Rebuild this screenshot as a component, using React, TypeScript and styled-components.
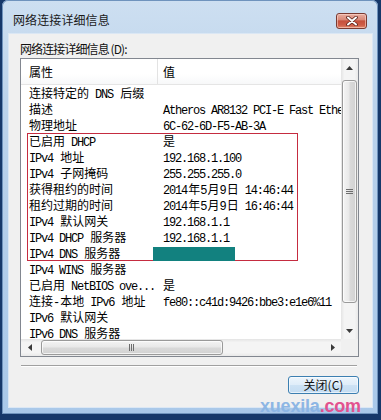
import React from 'react';
import styled, { createGlobalStyle } from 'styled-components';

const Global = createGlobalStyle`
  html, body { margin: 0; padding: 0; background: #17376a; }
  #root { width: 381px; height: 420px; }
`;

const Desktop = styled.div`
  width: 381px;
  height: 420px;
  box-sizing: border-box;
  padding: 0 3px 6px 2px;
  background: #16386a;
  display: flex;
  position: relative;
  overflow: hidden;
  font-family: "Noto Sans CJK SC", "Noto Sans", sans-serif;
  color: #000;
`;

const Window = styled.div`
  flex: 1;
  display: flex;
  flex-direction: column;
  border-radius: 6px 6px 0 0;
  background: linear-gradient(180deg, #cddff1 0%, #bcd3eb 25%, #b2cdea 60%, #a9c8e9 100%);
  box-shadow: inset 0 0 0 1px #6f93bd;
`;

const TitleBar = styled.div`
  height: 34px;
  display: flex;
  align-items: flex-start;
  justify-content: space-between;
  padding: 0 11px 0 11px;
`;

const Title = styled.div`
  margin-top: 12px;
  font-size: 12px;
  line-height: 16px;
  color: #1a1a1a;
  letter-spacing: 0.1px;
`;

const CloseButton = styled.div`
  margin-top: 13px;
  width: 31px;
  height: 16px;
  box-sizing: border-box;
  border: 1px solid #7a3a31;
  border-radius: 3px;
  background: linear-gradient(180deg, #e9ada0 0%, #d98a79 40%, #c5503c 50%, #cf5e48 80%, #e08a6e 100%);
  box-shadow: inset 0 0 0 1px rgba(255, 220, 210, 0.55);
  display: flex;
  align-items: center;
  justify-content: center;
`;

const Client = styled.div`
  flex: 1;
  margin: 0 6px 7px 7px;
  background: #f0f0f0;
  box-shadow: 0 0 0 1px #dbe7f4;
  display: flex;
  flex-direction: column;
  padding: 7px 13px 0 11px;
`;

const Label = styled.div`
  height: 17px;
  line-height: 16px;
  font-size: 12px;
  letter-spacing: -0.9px;
  color: #111;
  white-space: nowrap;
`;

const ListBox = styled.div`
  position: relative;
  height: 299px;
  box-sizing: border-box;
  border: 1px solid #828790;
  background: #fff;
  display: grid;
  grid-template-columns: 1fr 17px;
  grid-template-rows: 1fr 17px;
`;

const Viewport = styled.div`
  overflow: hidden;
  white-space: nowrap;
`;

const Header = styled.div`
  height: 26px;
  box-sizing: border-box;
  display: flex;
  border-bottom: 1px solid #e5e5e5;
  background: linear-gradient(180deg, #ffffff 0%, #ffffff 60%, #f7f8f9 100%);
`;

const HeaderCell = styled.div<{ $w?: number; $pad: number }>`
  ${(p) => (p.$w ? `width: ${p.$w}px; flex: none;` : 'flex: 1;')}
  box-sizing: border-box;
  padding-left: ${(p) => p.$pad}px;
  line-height: 25px;
  font-size: 12px;
  border-right: ${(p) => (p.$w ? '1px solid #e3e3e3' : 'none')};
`;

const Row = styled.div`
  display: flex;
  height: 16px;
  line-height: 16px;
`;

const Cell = styled.div<{ $w?: number; $pad: number }>`
  ${(p) => (p.$w ? `width: ${p.$w}px; flex: none; overflow: hidden;` : 'flex: 1;')}
  box-sizing: border-box;
  padding-left: ${(p) => p.$pad}px;
  font-size: 12px;
`;

const Han = styled.span`
  font-family: "Noto Sans CJK SC", sans-serif;
  font-size: 12px;
`;

const Latin = styled.span`
  font-family: "Liberation Mono", monospace;
  font-size: 12px;
  letter-spacing: -1.2px;
  margin-right: 1.2px;
`;

const VScroll = styled.div`
  display: flex;
  flex-direction: column;
  background: linear-gradient(90deg, #e4e4e4 0%, #f4f4f4 20%, #f4f4f4 80%, #e9e9e9 100%);
`;

const HScroll = styled.div`
  display: flex;
  background: linear-gradient(180deg, #e4e4e4 0%, #f4f4f4 20%, #f4f4f4 80%, #e9e9e9 100%);
`;

const ArrowBox = styled.div`
  width: 17px;
  height: 17px;
  flex: none;
  display: flex;
  align-items: center;
  justify-content: center;
`;

const VTrack = styled.div`
  flex: 1;
  display: flex;
  flex-direction: column;
`;

const HTrack = styled.div`
  flex: 1;
  display: flex;
`;

const VThumb = styled.div`
  margin: 4px 1px 0 1px;
  height: 223px;
  box-sizing: border-box;
  border: 1px solid #9a9a9a;
  border-radius: 3px;
  background: linear-gradient(90deg, #f4f4f4 0%, #e9e9e9 45%, #d9d9d9 55%, #d2d2d2 100%);
  box-shadow: inset 0 0 0 1px rgba(255, 255, 255, 0.7);
  display: flex;
  align-items: center;
  justify-content: center;
`;

const HThumb = styled.div`
  margin: 1px 0 1px 3px;
  width: 182px;
  box-sizing: border-box;
  border: 1px solid #9a9a9a;
  border-radius: 3px;
  background: linear-gradient(180deg, #f4f4f4 0%, #e9e9e9 45%, #d9d9d9 55%, #d2d2d2 100%);
  box-shadow: inset 0 0 0 1px rgba(255, 255, 255, 0.7);
  display: flex;
  align-items: center;
  justify-content: center;
`;

const Corner = styled.div`
  background: #f0f0f0;
`;

const Highlight = styled.div`
  position: absolute;
  left: 6px;
  top: 74px;
  width: 271px;
  height: 128px;
  box-sizing: border-box;
  border: 1px solid #c52c40;
  pointer-events: none;
`;

const Redaction = styled.div`
  position: absolute;
  left: 132px;
  top: 188px;
  width: 82px;
  height: 14px;
  background: #12817f;
`;

const Separator = styled.div`
  margin: 8px 2px 0 1px;
  height: 0;
  border-top: 1px solid #a0a0a0;
  border-bottom: 1px solid #ffffff;
`;

const ButtonRow = styled.div`
  display: flex;
  justify-content: flex-end;
  margin-top: 9px;
`;

const Button = styled.div`
  width: 71px;
  height: 18px;
  box-sizing: border-box;
  border: 1px solid #3c7fb1;
  border-radius: 3px;
  background: linear-gradient(180deg, #edf5fc 0%, #dfedf9 48%, #cde2f4 52%, #c3dcf2 100%);
  box-shadow: inset 0 0 0 1px rgba(255, 255, 255, 0.6);
  font-size: 12px;
  line-height: 16px;
  text-align: center;
  color: #111;
`;

const Watermark = styled.div`
  position: absolute;
  left: 260px;
  top: 396px;
  font-family: "Liberation Sans", Arial, sans-serif;
  font-weight: bold;
  font-size: 18px;
  line-height: 20px;
  letter-spacing: -0.2px;
`;

const WmBlue = styled.span`
  color: #8db6e4;
`;

const WmPink = styled.span`
  color: #e2528f;
`;

const CJK = /([\u2E80-\u9FFF\u3000-\u303F\uFF00-\uFFEF]+)/;

const Mixed: React.FC<{ text: string }> = ({ text }) => (
  <>
    {text
      .split(CJK)
      .filter((s) => s.length > 0)
      .map((s, i) => (CJK.test(s) ? <Han key={i}>{s}</Han> : <Latin key={i}>{s}</Latin>))}
  </>
);

const rows: [string, string][] = [
  ['连接特定的 DNS 后缀', ''],
  ['描述', 'Atheros AR8132 PCI-E Fast Ethernet Controller'],
  ['物理地址', '6C-62-6D-F5-AB-3A'],
  ['已启用 DHCP', '是'],
  ['IPv4 地址', '192.168.1.100'],
  ['IPv4 子网掩码', '255.255.255.0'],
  ['获得租约的时间', '2014年5月9日 14:46:44'],
  ['租约过期的时间', '2014年5月9日 16:46:44'],
  ['IPv4 默认网关', '192.168.1.1'],
  ['IPv4 DHCP 服务器', '192.168.1.1'],
  ['IPv4 DNS 服务器', ''],
  ['IPv4 WINS 服务器', ''],
  ['已启用 NetBIOS ove...', '是'],
  ['连接-本地 IPv6 地址', 'fe80::c41d:9426:bbe3:e1e6%11'],
  ['IPv6 默认网关', ''],
  ['IPv6 DNS 服务器', ''],
];

const Tri: React.FC<{ dir: 'up' | 'down' | 'left' | 'right' }> = ({ dir }) => {
  const pts = {
    up: '0,4 7,4 3.5,0',
    down: '0,0 7,0 3.5,4',
    left: '4,0 4,7 0,3.5',
    right: '0,0 0,7 4,3.5',
  }[dir];
  const vert = dir === 'up' || dir === 'down';
  return (
    <svg width={vert ? 7 : 4} height={vert ? 4 : 7} viewBox={vert ? '0 0 7 4' : '0 0 4 7'}>
      <polygon points={pts} fill="#3a3a3a" />
    </svg>
  );
};

const Grip: React.FC<{ vertical: boolean }> = ({ vertical }) => (
  <svg width={vertical ? 7 : 6} height={vertical ? 6 : 7} viewBox={vertical ? '0 0 7 6' : '0 0 6 7'}>
    {[0, 2, 4].map((o) =>
      vertical ? (
        <line key={o} x1="0" y1={o + 0.5} x2="7" y2={o + 0.5} stroke="#6d6d6d" strokeWidth="1" />
      ) : (
        <line key={o} x1={o + 0.5} y1="0" x2={o + 0.5} y2="7" stroke="#6d6d6d" strokeWidth="1" />
      )
    )}
  </svg>
);

export default function App() {
  return (
    <>
      <Global />
      <Desktop>
        <Window>
          <TitleBar>
            <Title>网络连接详细信息</Title>
            <CloseButton>
              <svg width="12" height="10" viewBox="0 0 12 10">
                <path d="M2 1.5 L10 8.5 M10 1.5 L2 8.5" stroke="#5a2018" strokeWidth="3.6" strokeLinecap="round" />
                <path d="M2 1.5 L10 8.5 M10 1.5 L2 8.5" stroke="#ffffff" strokeWidth="2" strokeLinecap="round" />
              </svg>
            </CloseButton>
          </TitleBar>
          <Client>
            <Label>网络连接详细信息 (D):</Label>
            <ListBox>
              <Viewport>
                <Header>
                  <HeaderCell $w={137} $pad={8}>属性</HeaderCell>
                  <HeaderCell $pad={5}>值</HeaderCell>
                </Header>
                {rows.map(([k, v], i) => (
                  <Row key={i}>
                    <Cell $w={136} $pad={8}>
                      <Mixed text={k} />
                    </Cell>
                    <Cell $pad={6}>
                      <Mixed text={v} />
                    </Cell>
                  </Row>
                ))}
              </Viewport>
              <VScroll>
                <ArrowBox>
                  <Tri dir="up" />
                </ArrowBox>
                <VTrack>
                  <VThumb>
                    <Grip vertical />
                  </VThumb>
                </VTrack>
                <ArrowBox>
                  <Tri dir="down" />
                </ArrowBox>
              </VScroll>
              <HScroll>
                <ArrowBox>
                  <Tri dir="left" />
                </ArrowBox>
                <HTrack>
                  <HThumb>
                    <Grip vertical={false} />
                  </HThumb>
                </HTrack>
                <ArrowBox>
                  <Tri dir="right" />
                </ArrowBox>
              </HScroll>
              <Corner />
              <Highlight />
              <Redaction />
            </ListBox>
            <Separator />
            <ButtonRow>
              <Button>关闭(C)</Button>
            </ButtonRow>
          </Client>
        </Window>
        <Watermark>
          <WmBlue>xuexila</WmBlue>
          <WmPink>.com</WmPink>
        </Watermark>
      </Desktop>
    </>
  );
}
